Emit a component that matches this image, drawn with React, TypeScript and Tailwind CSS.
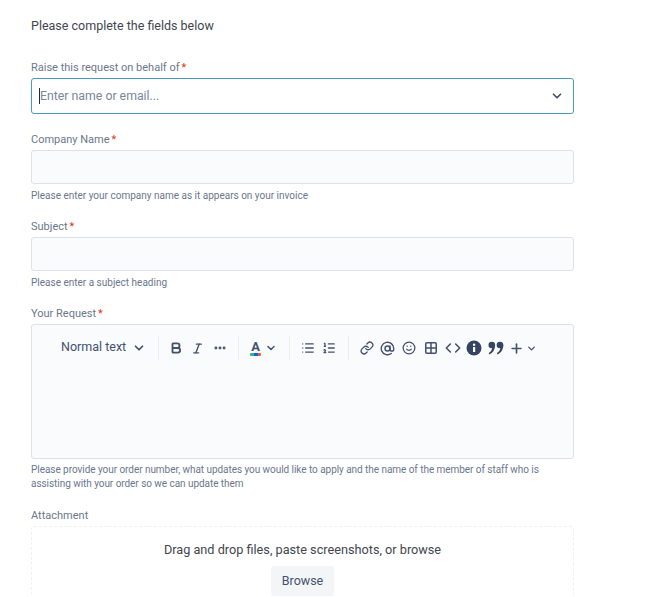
import { ChevronDown, Bold, Italic, Ellipsis, List, ListOrdered, Link, AtSign, Smile, Grid2x2, Code, Plus } from 'lucide-react';

function Label({ text, required }: { text: string; required?: boolean }) {
    return (
        <div className="text-[11px] leading-[16px] text-[#6b778c] h-[16px] pt-[1px]">
            {text}
            {required && <span className="text-[#de350b] ml-[2px]">*</span>}
        </div>
    );
}

function Help({ children }: { children: React.ReactNode }) {
    return <div className="text-[10px] leading-[14px] text-[#6b778c] mt-[5px]">{children}</div>;
}

function Divider() {
    return <div className="w-px h-[24px] bg-[#ebecf0]" />;
}

export default function App() {
    return (
        <div className="h-[597px] overflow-hidden bg-white pl-[31px] w-[574px] box-content font-['Roboto',sans-serif]">
            <div className="w-[543px]">
                <div className="pt-[17px] text-[12.5px] leading-[18px] text-[#42464f]">Please complete the fields below</div>

                <div className="mt-[24px]">
                    <Label text="Raise this request on behalf of" required />
                </div>
                <div className="mt-[3px] h-[36px] border border-[#4c9aba] rounded-[3px] bg-white flex items-center justify-between pl-[7px] pr-[9px]">
                    <div className="flex items-center text-[12.3px] text-[#7a869a]">
                        <span className="w-px h-[16px] bg-[#172b4d]" />
                        <span>Enter name or email...</span>
                    </div>
                    <ChevronDown className="w-[14px] h-[14px] text-[#42526e]" strokeWidth={3} />
                </div>

                <div className="mt-[17px]">
                    <Label text="Company Name" required />
                </div>
                <div className="mt-[3px] h-[34px] border border-[#dfe1e6] rounded-[3px] bg-[#fafbfc]" />
                <Help>Please enter your company name as it appears on your invoice</Help>

                <div className="mt-[15px]">
                    <Label text="Subject" required />
                </div>
                <div className="mt-[3px] h-[34px] border border-[#dfe1e6] rounded-[3px] bg-[#fafbfc]" />
                <Help>Please enter a subject heading</Help>

                <div className="mt-[15px]">
                    <Label text="Your Request" required />
                </div>
                <div className="mt-[3px] h-[135px] border border-[#dfe1e6] rounded-[3px] bg-[#fafbfc] pt-[11px] pl-[29px]">
                    <div className="flex items-center h-[24px] text-[#42526e]">
                        <span className="text-[12.5px] leading-[20px] mb-[3px]">Normal text</span>
                        <ChevronDown className="w-[14px] h-[14px] ml-[6px]" strokeWidth={3} />
                        <div className="ml-[12px]"><Divider /></div>
                        <Bold className="w-[14px] h-[14px] ml-[10px]" strokeWidth={3.2} />
                        <Italic className="w-[13px] h-[13px] ml-[8px]" strokeWidth={2.6} />
                        <Ellipsis className="w-[14px] h-[14px] ml-[9px]" strokeWidth={3} />
                        <div className="ml-[11px]"><Divider /></div>
                        <div className="ml-[11px] flex flex-col items-center">
                            <span className="text-[13px] leading-[12px] font-bold">A</span>
                            <span className="flex h-[3px] w-[11px] rounded-[1px] overflow-hidden">
                                <span className="flex-1 bg-[#36b37e]" />
                                <span className="flex-1 bg-[#0065ff]" />
                                <span className="flex-1 bg-[#ff5630]" />
                            </span>
                        </div>
                        <ChevronDown className="w-[12px] h-[12px] ml-[4px]" strokeWidth={3} />
                        <div className="ml-[12px]"><Divider /></div>
                        <List className="w-[14px] h-[14px] ml-[11px]" strokeWidth={2.2} />
                        <ListOrdered className="w-[14px] h-[14px] ml-[7px]" strokeWidth={2.2} />
                        <div className="ml-[12px]"><Divider /></div>
                        <Link className="w-[14px] h-[14px] ml-[11px]" strokeWidth={2.2} />
                        <AtSign className="w-[15px] h-[15px] ml-[6px]" strokeWidth={2.2} />
                        <Smile className="w-[14px] h-[14px] ml-[7px]" strokeWidth={2.2} />
                        <Grid2x2 className="w-[14px] h-[14px] ml-[8px]" strokeWidth={2.6} />
                        <Code className="w-[16px] h-[16px] ml-[7px]" strokeWidth={2.4} />
                        <svg viewBox="0 0 16 16" className="w-[16px] h-[16px] ml-[5px] text-[#344563]">
                            <circle cx="8" cy="8" r="7.5" fill="currentColor" />
                            <rect x="7" y="7" width="2.2" height="5" fill="#fff" />
                            <circle cx="8.1" cy="4.8" r="1.2" fill="#fff" />
                        </svg>
                        <svg viewBox="0 0 16 16" className="w-[16px] h-[16px] ml-[6px] text-[#344563]" fill="currentColor">
                            <circle cx="3.800" cy="5" r="3.300" />
                            <path d="M7.100 5c0 4.500-2.200 8-5.800 9.500l-.6-1.400C3 11.800 4.300 9.500 4.300 7z" />
                            <circle cx="12" cy="5" r="3.300" />
                            <path d="M15.300 5c0 4.500-2.200 8-5.800 9.500l-.6-1.400c2.300-1.300 3.600-3.600 3.600-6.100z" />
                        </svg>
                        <Plus className="w-[15px] h-[15px] ml-[5px]" strokeWidth={2.6} />
                        <ChevronDown className="w-[11px] h-[11px] ml-[2px]" strokeWidth={3} />
                    </div>
                </div>
                <div className="text-[10px] leading-[14px] tracking-[-0.05px] text-[#6b778c] mt-[4px]">
                    Please provide your order number, what updates you would like to apply and the name of the member of staff who is assisting with your order so we can update them
                </div>

                <div className="mt-[16px]">
                    <Label text="Attachment" />
                </div>
                <div className="mt-[3px] h-[100px] border border-dashed border-[#f0f1f4] rounded-[3px] flex flex-col items-center pt-[13px]">
                    <div className="text-[12.7px] leading-[20px] text-[#42464f]">Drag and drop files, paste screenshots, or browse</div>
                    <div className="mt-[6px] h-[30px] w-[63px] rounded-[3px] bg-[#f4f5f7] flex items-center justify-center text-[12.5px] text-[#42526e]">Browse</div>
                </div>
            </div>
        </div>
    );
}
